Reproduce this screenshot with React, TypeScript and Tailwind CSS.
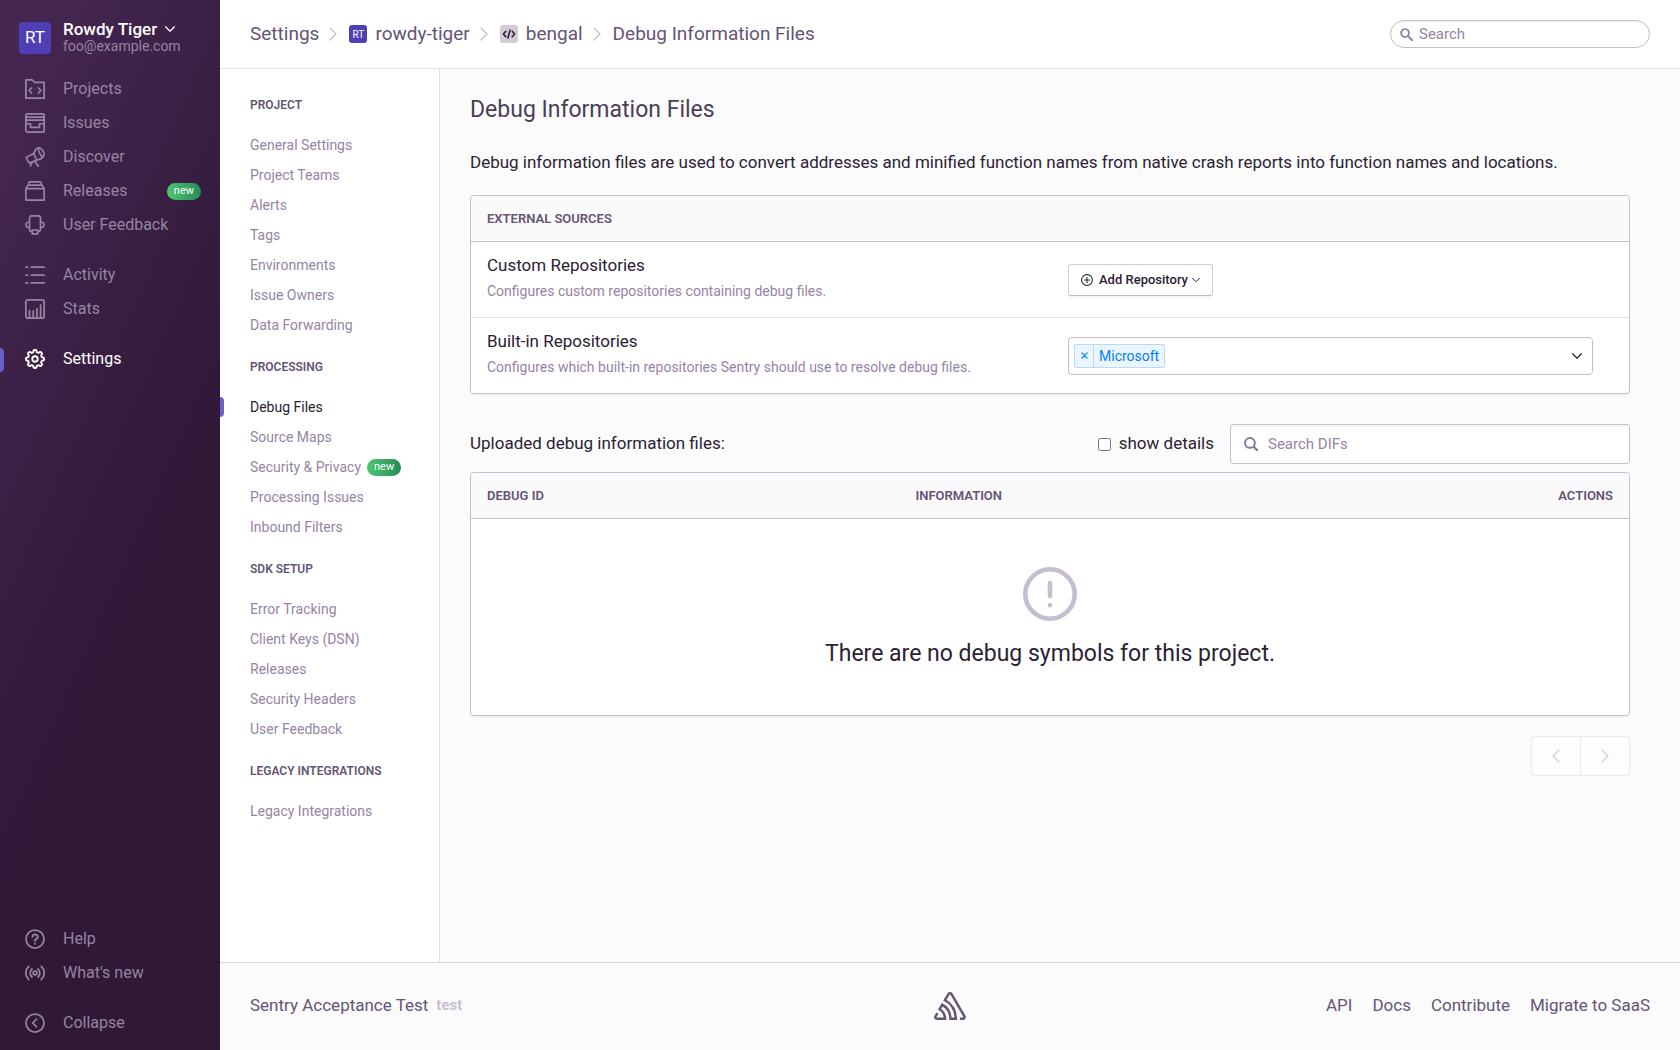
import type { ReactNode } from 'react';

type IconProps = { className?: string; children: ReactNode };

function Icon({ className = 'size-5', children }: IconProps) {
  return (
    <svg
      viewBox="0 0 16 16"
      fill="none"
      stroke="currentColor"
      strokeWidth="1.4"
      strokeLinecap="round"
      strokeLinejoin="round"
      className={className}
      aria-hidden="true"
    >
      {children}
    </svg>
  );
}

function gearPath() {
  const points: string[] = [];
  for (let i = 0; i < 128; i++) {
    const angle = (i / 128) * Math.PI * 2;
    const wave = Math.tanh(2.4 * Math.cos(8 * angle));
    const radius = 6.4 + 0.85 * wave;
    points.push(`${(8 + radius * Math.cos(angle)).toFixed(2)} ${(8 + radius * Math.sin(angle)).toFixed(2)}`);
  }
  return `M${points.join('L')}Z`;
}

const icons = {
  projects: (
    <Icon>
      <path d="M.7 15.3V.7h5l2.2 2h7.4v12.6Z" />
      <path d="M5.2 7.2 3.3 9.2l1.9 2M10.8 7.2l1.9 2-1.9 2" />
    </Icon>
  ),
  issues: (
    <Icon>
      <rect x=".7" y=".7" width="14.6" height="14.6" rx="1.4" />
      <path d="M.7 3.3h14.6M.7 5.7h14.6M.7 8.6h3.7v2.9h7.2V8.6h3.7" strokeWidth="1.3" />
    </Icon>
  ),
  discover: (
    <Icon>
      <path d="M.8 8.3 7 5.2l2.3 5.4-6 2.3Z" strokeWidth="1.3" />
      <path d="M7 5.2 8.7 2C9.6.5 11.3.5 12.4 1.1c2.7 1.4 3.4 4.7 2.1 6.9-1 1.7-3 1.9-5.2 2.6M10.7 1.1c.2 2.7 1.3 5 3.4 7.1" strokeWidth="1.3" />
      <path d="m5.6 12.3-1.3 3M7.7 11.5l3 3.8" strokeWidth="1.3" />
    </Icon>
  ),
  releases: (
    <Icon>
      <path d="M.7 6.1 2.3 3.3h11.4l1.6 2.8v9.2H.7ZM.7 6.1h14.6M2.6 3.3 3.3.7h9.4l.7 2.6" strokeWidth="1.3" />
    </Icon>
  ),
  feedback: (
    <Icon>
      <path d="M3.6 5.5V2.6Q3.6.7 5.5.7h5q1.9 0 1.9 1.9v2.9M3.6 10V5.6c-1.8 0-2.9 1-2.9 2.2s1.1 2.2 2.9 2.2ZM12.4 10V5.6c1.8 0 2.9 1 2.9 2.2s-1.1 2.2-2.9 2.2ZM3.6 10v1.5q0 1.8 2.2 1.8M12.4 10v1.5q0 1.8-2.2 1.8" strokeWidth="1.3" />
      <rect x="5.8" y="12" width="4.4" height="3.1" strokeWidth="1.3" />
    </Icon>
  ),
  activity: (
    <Icon>
      <path d="M.7 1.7h1.5M5.2 1.7h10.1M.7 8h1.5M5.2 8h10.1M.7 14.3h1.5M5.2 14.3h10.1" />
    </Icon>
  ),
  stats: (
    <Icon>
      <rect x=".7" y=".7" width="14.6" height="14.6" rx="1.6" />
      <path d="M3.6 15V9.3M6.6 15V9.5M9.6 15V7.8M12.5 15V4.8" />
    </Icon>
  ),
  settings: (
    <Icon>
      <path d={gearPath()} strokeWidth="1.5" />
      <circle cx="8" cy="8" r="2.2" strokeWidth="1.5" />
    </Icon>
  ),
  help: (
    <Icon>
      <circle cx="8" cy="8" r="7.2" />
      <path d="M5.9 6.3c0-2.8 4.3-2.6 4.3 0C10.2 7.9 8 7.9 8 9.5M8 11.7v.1" strokeWidth="1.5" />
    </Icon>
  ),
  broadcast: (
    <Icon>
      <circle cx="8" cy="8" r="1.5" />
      <path d="M5.6 11.2c-2-1.7-2-4.7 0-6.4M10.4 11.2c2-1.7 2-4.7 0-6.4M3 13.3C-.1 10.5-.1 5.500 3 2.700M13 13.300c3.100-2.800 3.100-7.800 0-10.600" />
    </Icon>
  ),
  collapse: (
    <Icon>
      <circle cx="8" cy="8" r="7.2" />
      <path d="M9.2 4.9 6.1 8l3.1 3.1" />
    </Icon>
  ),
};

function NewBadge() {
  return (
    <span className="flex h-[17px] items-center rounded-full bg-linear-to-r from-[#4dc771] to-[#268d57] px-[7px] text-[11px] text-white">
      new
    </span>
  );
}

type NavItem = { label: string; icon: ReactNode; badge?: boolean; active?: boolean };

const mainNav: NavItem[][] = [
  [
    { label: 'Projects', icon: icons.projects },
    { label: 'Issues', icon: icons.issues },
    { label: 'Discover', icon: icons.discover },
    { label: 'Releases', icon: icons.releases, badge: true },
    { label: 'User Feedback', icon: icons.feedback },
  ],
  [
    { label: 'Activity', icon: icons.activity },
    { label: 'Stats', icon: icons.stats },
  ],
  [{ label: 'Settings', icon: icons.settings, active: true }],
];

function SidebarLink({ item }: { item: NavItem }) {
  return (
    <a
      href="#"
      className={`relative flex h-[34px] items-center pr-[19px] pl-[25px] text-base ${item.active ? 'text-white' : 'text-[#9585a3]'}`}
    >
      {item.active && <span className="absolute top-1.5 left-0 h-6 w-1 rounded-r-sm bg-[#6c5fc7]" />}
      {item.icon}
      <span className="ml-[18px] flex-1">{item.label}</span>
      {item.badge && <NewBadge />}
    </a>
  );
}

function Sidebar() {
  return (
    <aside className="sticky top-0 flex h-screen w-[220px] shrink-0 flex-col bg-[linear-gradient(294deg,#2f1937_40%,#452650_93%)] pt-5 pb-2.5">
      <button type="button" className="flex items-end gap-3 px-[19px] text-left">
        <span className="flex size-8 items-center justify-center rounded bg-[#4e3fb4] text-[17px] text-white">RT</span>
        <span className="flex flex-col">
          <span className="flex items-center gap-2 text-[17px] leading-[18px] font-medium text-white">
            Rowdy Tiger
            <Icon className="size-2.5">
              <path d="M1 4.5 8 11.5l7-7" strokeWidth="2" />
            </Icon>
          </span>
          <span className="text-sm leading-4 text-[#9585a3]">foo@example.com</span>
        </span>
      </button>
      <nav aria-label="Primary" className="mt-[18px] flex flex-col gap-4">
        {mainNav.map((group) => (
          <div key={group[0].label}>
            {group.map((item) => (
              <SidebarLink key={item.label} item={item} />
            ))}
          </div>
        ))}
      </nav>
      <div className="mt-auto flex flex-col gap-4">
        <div>
          <SidebarLink item={{ label: 'Help', icon: icons.help }} />
          <SidebarLink item={{ label: "What's new", icon: icons.broadcast }} />
        </div>
        <button type="button" className="flex h-[34px] items-center pl-[25px] text-base text-[#9585a3]">
          {icons.collapse}
          <span className="ml-[18px]">Collapse</span>
        </button>
      </div>
    </aside>
  );
}

function CrumbDivider() {
  return (
    <svg viewBox="0 0 8 14" className="mr-3 ml-2.5 h-3.5 w-2 text-[#c6becf]" fill="none" stroke="currentColor" strokeWidth="1.3" strokeLinecap="round" strokeLinejoin="round" aria-hidden="true">
      <path d="m1 1 6 6-6 6" />
    </svg>
  );
}

function Header() {
  return (
    <header className="flex h-[69px] items-center justify-between border-b border-[#e2dbe8] bg-white px-[30px]">
      <nav aria-label="Breadcrumb" className="flex items-center text-[19px] text-[#645574]">
        <a href="#">Settings</a>
        <CrumbDivider />
        <a href="#" className="flex items-center gap-2">
          <span className="flex size-[18px] items-center justify-center rounded-[3px] bg-[#4e3fb4] text-[10px] text-white">RT</span>
          rowdy-tiger
        </a>
        <CrumbDivider />
        <a href="#" className="flex items-center gap-2">
          <span className="flex size-[18px] items-center justify-center rounded-[3px] bg-[#d2ccd8] text-[#2b2233]">
            <Icon className="size-3.5">
              <path d="M4.3 5 1.5 8l2.8 3M11.7 5l2.8 3-2.8 3M9.2 3.5l-2.4 9" strokeWidth="1.8" />
            </Icon>
          </span>
          bengal
        </a>
        <CrumbDivider />
        <a href="#" aria-current="page">Debug Information Files</a>
      </nav>
      <div className="flex h-7 w-[260px] items-center gap-1.5 rounded-full border border-[#c6becf] px-[9px] text-[#9585a3] shadow-[inset_0_2px_0_rgba(0,0,0,0.03)]">
        <Icon className="size-[13px]">
          <circle cx="6.2" cy="6.2" r="4.8" strokeWidth="2.4" />
          <path d="m10 10 5 5" strokeWidth="2.6" />
        </Icon>
        <input type="text" aria-label="Search settings" placeholder="Search" className="min-w-0 flex-1 bg-transparent text-[15px] outline-none placeholder:text-[#9585a3]" />
      </div>
    </header>
  );
}

const settingsNav = [
  { title: 'Project', items: ['General Settings', 'Project Teams', 'Alerts', 'Tags', 'Environments', 'Issue Owners', 'Data Forwarding'] },
  { title: 'Processing', items: ['Debug Files', 'Source Maps', 'Security & Privacy', 'Processing Issues', 'Inbound Filters'] },
  { title: 'SDK Setup', items: ['Error Tracking', 'Client Keys (DSN)', 'Releases', 'Security Headers', 'User Feedback'] },
  { title: 'Legacy Integrations', items: ['Legacy Integrations'] },
];

function SettingsNav() {
  return (
    <nav aria-label="Settings" className="flex w-[220px] shrink-0 flex-col gap-[17px] border-r border-[#e2dee6] bg-white pt-[26px] pb-8">
      {settingsNav.map((section) => (
        <section key={section.title}>
          <h2 className="mb-[15px] px-[30px] text-xs leading-5 font-semibold text-[#645574] uppercase">{section.title}</h2>
          <ul>
            {section.items.map((item) => {
              const active = item === 'Debug Files';
              return (
                <li key={item} className="relative">
                  {active && <span className="absolute top-[5px] left-0 h-5 w-1 rounded-r-sm bg-[#6c5fc7]" />}
                  <a href="#" className={`flex h-[30px] items-center gap-1.5 px-[30px] text-sm ${active ? 'text-[#2b2233]' : 'text-[#9585a3]'}`}>
                    {item}
                    {item === 'Security & Privacy' && <NewBadge />}
                  </a>
                </li>
              );
            })}
          </ul>
        </section>
      ))}
    </nav>
  );
}

function SettingRow({ title, help, children }: { title: string; help: string; children: ReactNode }) {
  return (
    <div>
      <div className="grid min-h-[75px] grid-cols-2 items-center px-4">
        <div className="pr-4 pb-[3px]">
          <h3 className="text-[17px] leading-6 text-[#2b2233]">{title}</h3>
          <p className="mt-0.5 text-sm leading-6 text-[#9585a3]">{help}</p>
        </div>
        <div className="pr-5 pl-[18px]">{children}</div>
      </div>
    </div>
  );
}

function ExternalSources() {
  return (
    <section className="rounded border border-[#c6becf] bg-white shadow-[0_2px_0_rgba(37,11,54,0.04)]">
      <h2 className="flex h-[46px] items-center rounded-t border-b border-[#c6becf] bg-[#faf9fb] px-4 text-[13px] font-semibold text-[#645574] uppercase">
        External Sources
      </h2>
      <div className="divide-y divide-[#e2dee6]">
        <SettingRow title="Custom Repositories" help="Configures custom repositories containing debug files.">
          <button type="button" className="flex h-8 items-center rounded-[3px] border border-[#d4cddb] border-b-[#c0b8c9] bg-white px-3 text-[13px] font-medium text-[#2b2233] shadow-[0_2px_0_rgba(0,0,0,0.04)]">
            <Icon className="mr-1.5 size-3">
              <circle cx="8" cy="8" r="7.2" />
              <path d="M8 4.5v7M4.5 8h7" />
            </Icon>
            Add Repository
            <Icon className="ml-1 size-2">
              <path d="m1 4.5 7 7 7-7" strokeWidth="2" />
            </Icon>
          </button>
        </SettingRow>
        <SettingRow title="Built-in Repositories" help="Configures which built-in repositories Sentry should use to resolve debug files.">
          <div className="flex h-[38px] items-center rounded border border-[#c6becf] bg-white pr-2.5 pl-[5px]">
            <span className="flex h-6 items-center rounded-xs border border-[#b5dafe] bg-[#ebf5ff] text-sm text-[#007eff]">
              <button type="button" aria-label="Remove Microsoft" className="flex h-full w-[19px] items-center justify-center border-r border-[#b5dafe]">
                <Icon className="size-[7px]">
                  <path d="m2 2 12 12M14 2 2 14" strokeWidth="3" />
                </Icon>
              </button>
              <span className="px-[5px]">Microsoft</span>
            </span>
            <input type="text" role="combobox" aria-expanded="false" aria-label="Built-in Repositories" className="min-w-0 flex-1 outline-none" />
            <button type="button" aria-label="Open repositories" className="text-[#2b2233]">
              <Icon className="size-2.5">
                <path d="m1 4.5 7 7 7-7" strokeWidth="2" />
              </Icon>
            </button>
          </div>
        </SettingRow>
      </div>
    </section>
  );
}

function UploadedFiles() {
  return (
    <section>
      <div className="mt-[30px] mb-2 flex items-center">
        <h2 className="flex-1 text-[17px] text-[#2b2233]">Uploaded debug information files:</h2>
        <label className="mr-4 flex items-center gap-2 text-[17px] text-[#2b2233]">
          <input type="checkbox" className="size-[13px]" />
          show details
        </label>
        <div className="flex h-10 w-[400px] items-center gap-2.5 rounded-[3px] border border-[#c6becf] bg-white px-[13px] text-[#8b78a0] shadow-[inset_0_2px_0_rgba(0,0,0,0.03)]">
          <Icon className="size-3.5">
            <circle cx="6.8" cy="6.8" r="5.6" strokeWidth="2.3" />
            <path d="m11 11 4 4" strokeWidth="2.5" />
          </Icon>
          <input type="text" aria-label="Search debug information files" placeholder="Search DIFs" className="min-w-0 flex-1 text-[15px] outline-none placeholder:text-[#9585a3]" />
        </div>
      </div>
      <div className="rounded border border-[#c6becf] bg-white shadow-[0_2px_0_rgba(37,11,54,0.04)]">
        <table className="w-full table-fixed text-left text-[13px] text-[#645574]">
          <thead>
            <tr className="h-[45px] bg-[#faf9fb] uppercase">
              <th scope="col" className="w-[37%] rounded-tl border-b border-[#c6becf] pl-4 font-semibold">Debug ID</th>
              <th scope="col" className="border-b border-[#c6becf] pl-4 font-semibold">Information</th>
              <th scope="col" className="w-[20%] rounded-tr border-b border-[#c6becf] pr-4 text-right font-semibold">Actions</th>
            </tr>
          </thead>
          <tbody>
            <tr>
              <td colSpan={3} className="pt-12 pb-[46px]">
                <div className="flex flex-col items-center gap-[18px] text-[23px] leading-[30px] text-[#2b2233]">
                  <svg viewBox="0 0 54 54" className="size-[54px] text-[#c6becf]" fill="none" stroke="currentColor" strokeWidth="4.6" strokeLinecap="round" aria-hidden="true">
                    <circle cx="27" cy="27" r="24.7" />
                    <path d="M27 16v13M27 38.2v.1" />
                  </svg>
                  There are no debug symbols for this project.
                </div>
              </td>
            </tr>
          </tbody>
        </table>
      </div>
      <div className="mt-5 flex justify-end text-[#d8d3de]">
        <button type="button" disabled aria-label="Previous page" className="flex h-10 w-[50px] items-center justify-center rounded-l-[3px] border border-[#ebe9ed] bg-[#fdfdfd]">
          <svg viewBox="0 0 8 14" className="h-3.5 w-2" fill="none" stroke="currentColor" strokeWidth="1.5" strokeLinecap="round" strokeLinejoin="round" aria-hidden="true">
            <path d="M7 1 1 7l6 6" />
          </svg>
        </button>
        <button type="button" disabled aria-label="Next page" className="flex h-10 w-[49px] items-center justify-center rounded-r-[3px] border border-l-0 border-[#ebe9ed] bg-[#fdfdfd]">
          <svg viewBox="0 0 8 14" className="h-3.5 w-2" fill="none" stroke="currentColor" strokeWidth="1.5" strokeLinecap="round" strokeLinejoin="round" aria-hidden="true">
            <path d="m1 1 6 6-6 6" />
          </svg>
        </button>
      </div>
    </section>
  );
}

function Footer() {
  return (
    <footer className="grid h-[88px] grid-cols-[1fr_auto_1fr] items-center border-t border-[#dcd8e2] bg-[#fbfbfc] px-[30px] pb-0.5 text-[17px] text-[#645574]">
      <div className="flex items-center gap-2">
        Sentry Acceptance Test
        <span className="text-[15px] font-semibold text-[#c6becf]">test</span>
      </div>
      <a href="#" aria-label="Sentry">
        <svg viewBox="0 0 50 44" className="h-7 w-8" fill="currentColor" aria-hidden="true">
          <path d="M29,2.26a4.67,4.67,0,0,0-8,0L14.42,13.53A32.21,32.21,0,0,1,32.17,40.19H27.55A27.68,27.68,0,0,0,12.09,17.47L6,28a15.92,15.92,0,0,1,9.23,12.17H4.62A.76.76,0,0,1,4,39.06l2.94-5a10.74,10.74,0,0,0-3.36-1.9l-2.91,5a4.54,4.54,0,0,0,1.69,6.24A4.66,4.66,0,0,0,4.62,44H19.15a19.4,19.4,0,0,0-8-17.31l2.31-4A23.87,23.87,0,0,1,23.76,44H36.07a35.88,35.88,0,0,0-16.41-31.8l4.67-8a.77.77,0,0,1,1.05-.27c.53.29,20.29,34.77,20.66,35.17a.76.76,0,0,1-.68,1.13H40.6q.09,1.91,0,3.81h4.78A4.59,4.59,0,0,0,50,39.43a4.49,4.49,0,0,0-.62-2.28Z" />
        </svg>
      </a>
      <nav aria-label="Footer" className="flex justify-end gap-5">
        <a href="#">API</a>
        <a href="#">Docs</a>
        <a href="#">Contribute</a>
        <a href="#">Migrate to SaaS</a>
      </nav>
    </footer>
  );
}

export default function App() {
  return (
    <div className="flex min-h-screen bg-[#fbfbfc] font-['Roboto','Liberation_Sans',sans-serif]">
      <Sidebar />
      <div className="flex min-w-0 flex-1 flex-col">
        <Header />
        <div className="flex flex-1">
          <SettingsNav />
          <main className="min-w-0 flex-1 pt-[25px] pr-[50px] pb-5 pl-[30px]">
            <h1 className="text-[23px] leading-8 text-[#4a3e56]">Debug Information Files</h1>
            <p className="mt-6 mb-5 text-[17px] leading-[25px] text-[#2b2233]">
              Debug information files are used to convert addresses and minified function names from native crash reports into function names and locations.
            </p>
            <ExternalSources />
            <UploadedFiles />
          </main>
        </div>
        <Footer />
      </div>
    </div>
  );
}
